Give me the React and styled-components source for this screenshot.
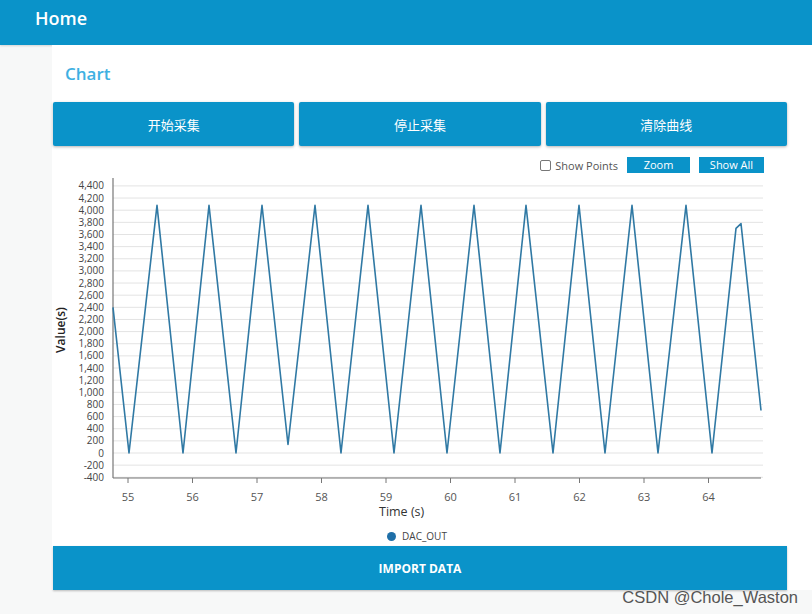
import React from 'react'
import styled, { createGlobalStyle } from 'styled-components'

const GlobalStyle = createGlobalStyle`
    html, body {
        margin: 0;
        padding: 0;
        background: #f7f8f8;
        font-family: "Open Sans", "Noto Sans CJK SC", sans-serif;
    }
`

const BLUE = '#0a93c9'

// page coords used directly inside the svg through its viewBox
const valueY = (v) => 453 - v * 0.0607
const tickX = (t) => 127 + (t - 55) * 64.5

const wave = [
    [112, 2400], [128, 0], [156, 4080], [182, 0], [208, 4080], [235, 0],
    [261, 4080], [287, 140], [314, 4080], [340, 0], [367, 4080], [393, 0],
    [420, 4080], [446, 0], [473, 4080], [499, 0], [525, 4080], [552, 0],
    [578, 4080], [604, 0], [631, 4080], [657, 0], [685, 4080], [711, 0],
    [735, 3700], [740, 3780], [760, 700],
]

const yTicks = []
for (let v = -400; v <= 4400; v += 200) yTicks.push(v)
const xTicks = [55, 56, 57, 58, 59, 60, 61, 62, 63, 64]

function Chart() {
    return (
        <Plot viewBox="52 176 735 345" width="735" height="345">
            {yTicks.map(v => (
                <g key={v}>
                    <line x1="112" x2="762" y1={valueY(v)} y2={valueY(v)} stroke="#e3e3e3" strokeWidth="1" />
                    <text x="103" y={valueY(v) + 3.5} textAnchor="end" fontSize="10" fill="#444">
                        {v.toLocaleString('en-US')}
                    </text>
                </g>
            ))}
            <line x1="112" x2="112" y1="178" y2="478" stroke="#777" strokeWidth="1.2" />
            <line x1="112" x2="760" y1="478" y2="478" stroke="#777" strokeWidth="1.2" />
            {xTicks.map(t => (
                <g key={t}>
                    <line x1={tickX(t)} x2={tickX(t)} y1="478" y2="483" stroke="#777" />
                    <text x={tickX(t)} y="501" textAnchor="middle" fontSize="11" fill="#555">{t}</text>
                </g>
            ))}
            <polyline
                points={wave.map(([x, v]) => `${x},${valueY(v)}`).join(' ')}
                fill="none"
                stroke="#3079a4"
                strokeWidth="1.6"
                strokeLinejoin="round"
            />
            <text x="64" y="330" transform="rotate(-90 64 330)" textAnchor="middle" fontSize="12" fontWeight="600" fill="#222">
                Value(s)
            </text>
            <text x="378" y="516" fontSize="12.5" fill="#333">Time (s)</text>
        </Plot>
    )
}

export default function App() {
    return (
        <Page>
            <GlobalStyle />
            <Header>Home</Header>
            <Main>
                <Card>
                    <Title>Chart</Title>
                    <ButtonRow>
                        <ActionButton>开始采集</ActionButton>
                        <ActionButton>停止采集</ActionButton>
                        <ActionButton>清除曲线</ActionButton>
                    </ButtonRow>
                    <Controls>
                        <CheckLabel>
                            <Box />
                            Show Points
                        </CheckLabel>
                        <SmallButton $w={63}>Zoom</SmallButton>
                        <SmallButton $w={65}>Show All</SmallButton>
                    </Controls>
                    <Chart />
                    <Legend>
                        <Dot />
                        DAC_OUT
                    </Legend>
                    <ImportButton>IMPORT DATA</ImportButton>
                </Card>
            </Main>
            <Watermark>CSDN @Chole_Waston</Watermark>
        </Page>
    )
}

const Page = styled.div`
    position: relative;
    width: 812px;
    height: 614px;
    overflow: hidden;
    background: #f7f8f8;
`

const Header = styled.div`
    height: 45px;
    box-sizing: border-box;
    background: ${BLUE};
    color: #fff;
    font-size: 18px;
    font-weight: 600;
    padding: 6px 0 0 35px;
    box-shadow: 0 1px 2px rgba(0, 0, 0, 0.15);
`

const Main = styled.div`
    padding-left: 52px;
`

const Card = styled.div`
    background: #fff;
    padding: 17px 25px 0 1px;
    display: flex;
    flex-direction: column;
`

const Title = styled.div`
    height: 24px;
    line-height: 24px;
    padding-left: 12px;
    font-size: 17px;
    font-weight: 600;
    color: #3eb0e2;
    margin-bottom: 16px;
`

const ButtonRow = styled.div`
    display: grid;
    grid-template-columns: 1fr 1fr 1fr;
    gap: 5px;
`

const ActionButton = styled.button`
    height: 44px;
    border: none;
    border-radius: 2px;
    background: ${BLUE};
    color: #fff;
    font-family: "Open Sans", "Noto Sans CJK SC", sans-serif;
    font-size: 13px;
    box-shadow: 0 1px 3px rgba(0, 0, 0, 0.3);
`

const Controls = styled.div`
    display: flex;
    align-items: center;
    justify-content: flex-end;
    height: 20px;
    margin-top: 9px;
    padding-right: 23px;
    gap: 9px;
`

const CheckLabel = styled.label`
    display: flex;
    align-items: center;
    gap: 4px;
    font-size: 11px;
    color: #555;
`

const Box = styled.span`
    width: 9px;
    height: 9px;
    border: 1px solid #777;
    border-radius: 2px;
    background: #fff;
`

const SmallButton = styled.button`
    width: ${p => p.$w}px;
    height: 16px;
    padding: 0;
    border: none;
    background: ${BLUE};
    color: #fff;
    font-family: "Open Sans", sans-serif;
    font-size: 11px;
    line-height: 16px;
`

const Plot = styled.svg`
    display: block;
    margin-top: 1px;
    font-family: "Open Sans", sans-serif;
`

const Legend = styled.div`
    height: 20px;
    margin-top: 5px;
    display: flex;
    align-items: center;
    justify-content: center;
    gap: 6px;
    font-size: 10px;
    color: #444;
    padding-right: 6px;
`

const Dot = styled.span`
    width: 9px;
    height: 9px;
    border-radius: 50%;
    background: #1f6fa8;
`

const ImportButton = styled.button`
    height: 44px;
    border: none;
    background: ${BLUE};
    color: #fff;
    font-family: "Open Sans", sans-serif;
    font-size: 12px;
    font-weight: 700;
    box-shadow: 0 1px 2px rgba(0, 0, 0, 0.25);
`

const Watermark = styled.div`
    position: absolute;
    right: 14px;
    bottom: 7px;
    font-family: "Liberation Sans", Arial, sans-serif;
    font-size: 16.5px;
    color: #555;
`
